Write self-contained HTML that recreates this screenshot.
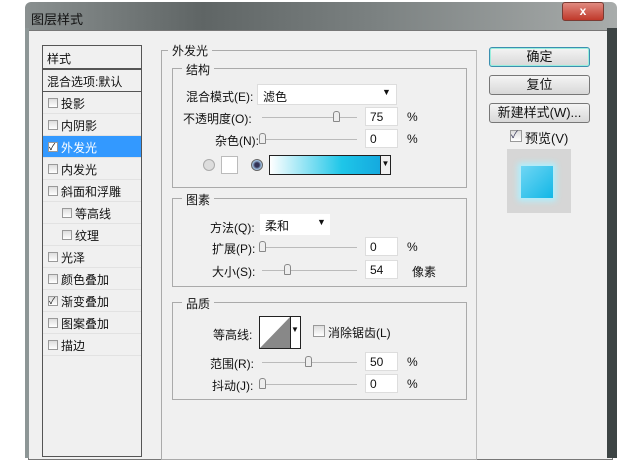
<!DOCTYPE html>
<html><head><meta charset="utf-8"><style>
*{margin:0;padding:0;box-sizing:border-box}
body{width:643px;height:454px;background:#fff;position:relative;overflow:hidden;font-family:"Liberation Sans","Noto Sans CJK SC",sans-serif;font-size:12px;color:#111}
.a{position:absolute}
.title{left:25px;top:2px;width:592px;height:30px;background:linear-gradient(90deg,#8a9090 0%,#5f6565 30%,#7c8282 60%,#a8acab 100%);border-radius:6px 6px 0 0}
.body{left:28px;top:30px;width:585px;height:430px;background:#f0f0f0;border:1px solid #777}
.frame{left:25px;top:28px;width:592px;height:430px;border-left:4px solid #8d9696;border-right:10px solid #3d4444}
.t{position:absolute;white-space:nowrap}
.cb{position:absolute;width:10px;height:10px;border:1px solid #999;background:linear-gradient(#ddd,#fff)}
.list{left:42px;top:45px;width:100px;height:412px;border:1px solid #555;background:#f0f0f0}
.it{position:absolute;left:0;width:98px;height:22px;border-bottom:1px solid #e2e2e2}
.grp{position:absolute;border:1px solid #aaa}
.lbl{position:absolute;background:#f0f0f0;padding:0 4px}
.inp{position:absolute;width:33px;height:19px;background:#fff;border:1px solid #ddd;padding-left:4px;line-height:18px}
.sl{position:absolute;height:1px;background:#bbb}
.th{position:absolute;width:7px;height:11px;border:1px solid #888;border-radius:3px 3px 1px 1px;background:#eee}
.btn{position:absolute;left:489px;width:101px;height:20px;border:1px solid #777;border-radius:3px;background:linear-gradient(#f4f4f4,#d8d8d8);text-align:center;line-height:18px;font-size:13px}
</style></head><body>
<div class="a title"></div>
<div class="t" style="left:31px;top:9px;font-size:13px">图层样式</div>
<div class="a" style="left:562px;top:2px;width:42px;height:19px;border-radius:3px;background:linear-gradient(#e08a80,#c0392b);border:1px solid #7a3b33;color:#fff;text-align:center;font-weight:bold;line-height:17px">x</div>
<div class="a body"></div>
<div class="a frame"></div>
<div class="a list">
<div class="it" style="top:0;height:24px;border-bottom:2px solid #555"><span class="t" style="left:4px;top:4px">样式</span></div>
<div class="it" style="top:24px;border-bottom:1px solid #555"><span class="t" style="left:4px;top:3px">混合选项:默认</span></div>
<div class="it" style="top:46px"><span class="cb" style="left:5px;top:6px"></span><span class="t" style="left:18px;top:3px">投影</span></div>
<div class="it" style="top:68px"><span class="cb" style="left:5px;top:6px"></span><span class="t" style="left:18px;top:3px">内阴影</span></div>
<div class="it" style="top:90px;background:#3399ff;color:#fff"><span class="cb" style="left:5px;top:6px;background:#fff;color:#000;font-size:9px;line-height:8px">✓</span><span class="t" style="left:18px;top:3px">外发光</span></div>
<div class="it" style="top:112px"><span class="cb" style="left:5px;top:6px"></span><span class="t" style="left:18px;top:3px">内发光</span></div>
<div class="it" style="top:134px"><span class="cb" style="left:5px;top:6px"></span><span class="t" style="left:18px;top:3px">斜面和浮雕</span></div>
<div class="it" style="top:156px"><span class="cb" style="left:19px;top:6px"></span><span class="t" style="left:32px;top:3px">等高线</span></div>
<div class="it" style="top:178px"><span class="cb" style="left:19px;top:6px"></span><span class="t" style="left:32px;top:3px">纹理</span></div>
<div class="it" style="top:200px"><span class="cb" style="left:5px;top:6px"></span><span class="t" style="left:18px;top:3px">光泽</span></div>
<div class="it" style="top:222px"><span class="cb" style="left:5px;top:6px"></span><span class="t" style="left:18px;top:3px">颜色叠加</span></div>
<div class="it" style="top:244px"><span class="cb" style="left:5px;top:6px;font-size:9px;line-height:8px">✓</span><span class="t" style="left:18px;top:3px">渐变叠加</span></div>
<div class="it" style="top:266px"><span class="cb" style="left:5px;top:6px"></span><span class="t" style="left:18px;top:3px">图案叠加</span></div>
<div class="it" style="top:288px"><span class="cb" style="left:5px;top:6px"></span><span class="t" style="left:18px;top:3px">描边</span></div>
</div>
<div class="grp" style="left:161px;top:50px;width:316px;height:410px;border-right:1px solid #bbb"></div>
<div class="lbl" style="left:168px;top:42px">外发光</div>

<div class="grp" style="left:172px;top:68px;width:295px;height:120px"></div>
<div class="lbl" style="left:182px;top:61px">结构</div>
<div class="t" style="left:186px;top:88px">混合模式(E):</div>
<div class="a" style="left:257px;top:84px;width:140px;height:21px;background:#fff;border:1px solid #ddd"><span class="t" style="left:5px;top:3px">滤色</span><span class="t" style="left:124px;top:2px;font-size:9px">▼</span></div>
<div class="t" style="left:183px;top:110px">不透明度(O):</div>
<div class="sl" style="left:262px;top:117px;width:95px"></div><div class="th" style="left:333px;top:111px"></div>
<div class="inp" style="left:365px;top:107px">75</div><div class="t" style="left:407px;top:110px">%</div>
<div class="t" style="left:215px;top:132px">杂色(N):</div>
<div class="sl" style="left:262px;top:139px;width:95px"></div><div class="th" style="left:259px;top:133px"></div>
<div class="inp" style="left:365px;top:129px">0</div><div class="t" style="left:407px;top:132px">%</div>
<div class="a" style="left:203px;top:159px;width:12px;height:12px;border-radius:50%;border:1px solid #aaa;background:#ddd"></div>
<div class="a" style="left:221px;top:156px;width:17px;height:18px;background:#fff;border:1px solid #bbb"></div>
<div class="a" style="left:251px;top:159px;width:12px;height:12px;border-radius:50%;border:1px solid #666;background:radial-gradient(#335 30%,#9bd 60%,#ddd)"></div>
<div class="a" style="left:269px;top:155px;width:122px;height:20px;border:1px solid #222;background:linear-gradient(90deg,#fff,#1ec6e8 60%,#13a2dc 100%)"></div>
<div class="a" style="left:380px;top:155px;width:11px;height:20px;border:1px solid #222;background:#f0f0f0;font-size:8px;text-align:center;line-height:16px">▼</div>

<div class="grp" style="left:172px;top:198px;width:295px;height:89px"></div>
<div class="lbl" style="left:182px;top:191px">图素</div>
<div class="t" style="left:210px;top:219px">方法(Q):</div>
<div class="a" style="left:260px;top:214px;width:70px;height:21px;background:#fff"><span class="t" style="left:5px;top:3px">柔和</span><span class="t" style="left:57px;top:3px;font-size:9px">▼</span></div>
<div class="t" style="left:212px;top:240px">扩展(P):</div>
<div class="sl" style="left:262px;top:247px;width:95px"></div><div class="th" style="left:259px;top:241px"></div>
<div class="inp" style="left:365px;top:237px">0</div><div class="t" style="left:407px;top:240px">%</div>
<div class="t" style="left:212px;top:263px">大小(S):</div>
<div class="sl" style="left:262px;top:270px;width:95px"></div><div class="th" style="left:284px;top:264px"></div>
<div class="inp" style="left:365px;top:260px">54</div><div class="t" style="left:412px;top:263px">像素</div>

<div class="grp" style="left:172px;top:302px;width:295px;height:98px"></div>
<div class="lbl" style="left:182px;top:295px">品质</div>
<div class="t" style="left:213px;top:326px">等高线:</div>
<div class="a" style="left:259px;top:316px;width:42px;height:33px;border:1px solid #222;background:#fff;overflow:hidden">
<svg width="40" height="31" style="position:absolute;left:0;top:0"><polygon points="0,31 30,0 30,31" fill="#888"/><line x1="30.5" y1="0" x2="30.5" y2="31" stroke="#222"/></svg>
<span class="t" style="left:31px;top:8px;font-size:8px">▼</span></div>
<div class="cb" style="left:313px;top:325px;width:12px;height:12px"></div>
<div class="t" style="left:328px;top:324px">消除锯齿(L)</div>
<div class="t" style="left:210px;top:355px">范围(R):</div>
<div class="sl" style="left:262px;top:362px;width:95px"></div><div class="th" style="left:305px;top:356px"></div>
<div class="inp" style="left:365px;top:352px">50</div><div class="t" style="left:407px;top:355px">%</div>
<div class="t" style="left:212px;top:377px">抖动(J):</div>
<div class="sl" style="left:262px;top:384px;width:95px"></div><div class="th" style="left:259px;top:378px"></div>
<div class="inp" style="left:365px;top:374px">0</div><div class="t" style="left:407px;top:377px">%</div>

<div class="btn" style="top:47px;border-color:#3c8fb0;box-shadow:inset 0 0 0 1px #9ed">确定</div>
<div class="btn" style="top:75px">复位</div>
<div class="btn" style="top:103px">新建样式(W)...</div>
<div class="cb" style="left:510px;top:130px;width:12px;height:12px;font-size:10px;line-height:10px;color:#335">✓</div>
<div class="t" style="left:525px;top:128px;font-size:13px">预览(V)</div>
<div class="a" style="left:507px;top:149px;width:64px;height:64px;background:#d6d6d6"></div>
<div class="a" style="left:521px;top:166px;width:32px;height:32px;background:linear-gradient(135deg,#6fd6f4,#12b7e6);box-shadow:0 0 6px 3px #aef0ff"></div>
</body></html>
